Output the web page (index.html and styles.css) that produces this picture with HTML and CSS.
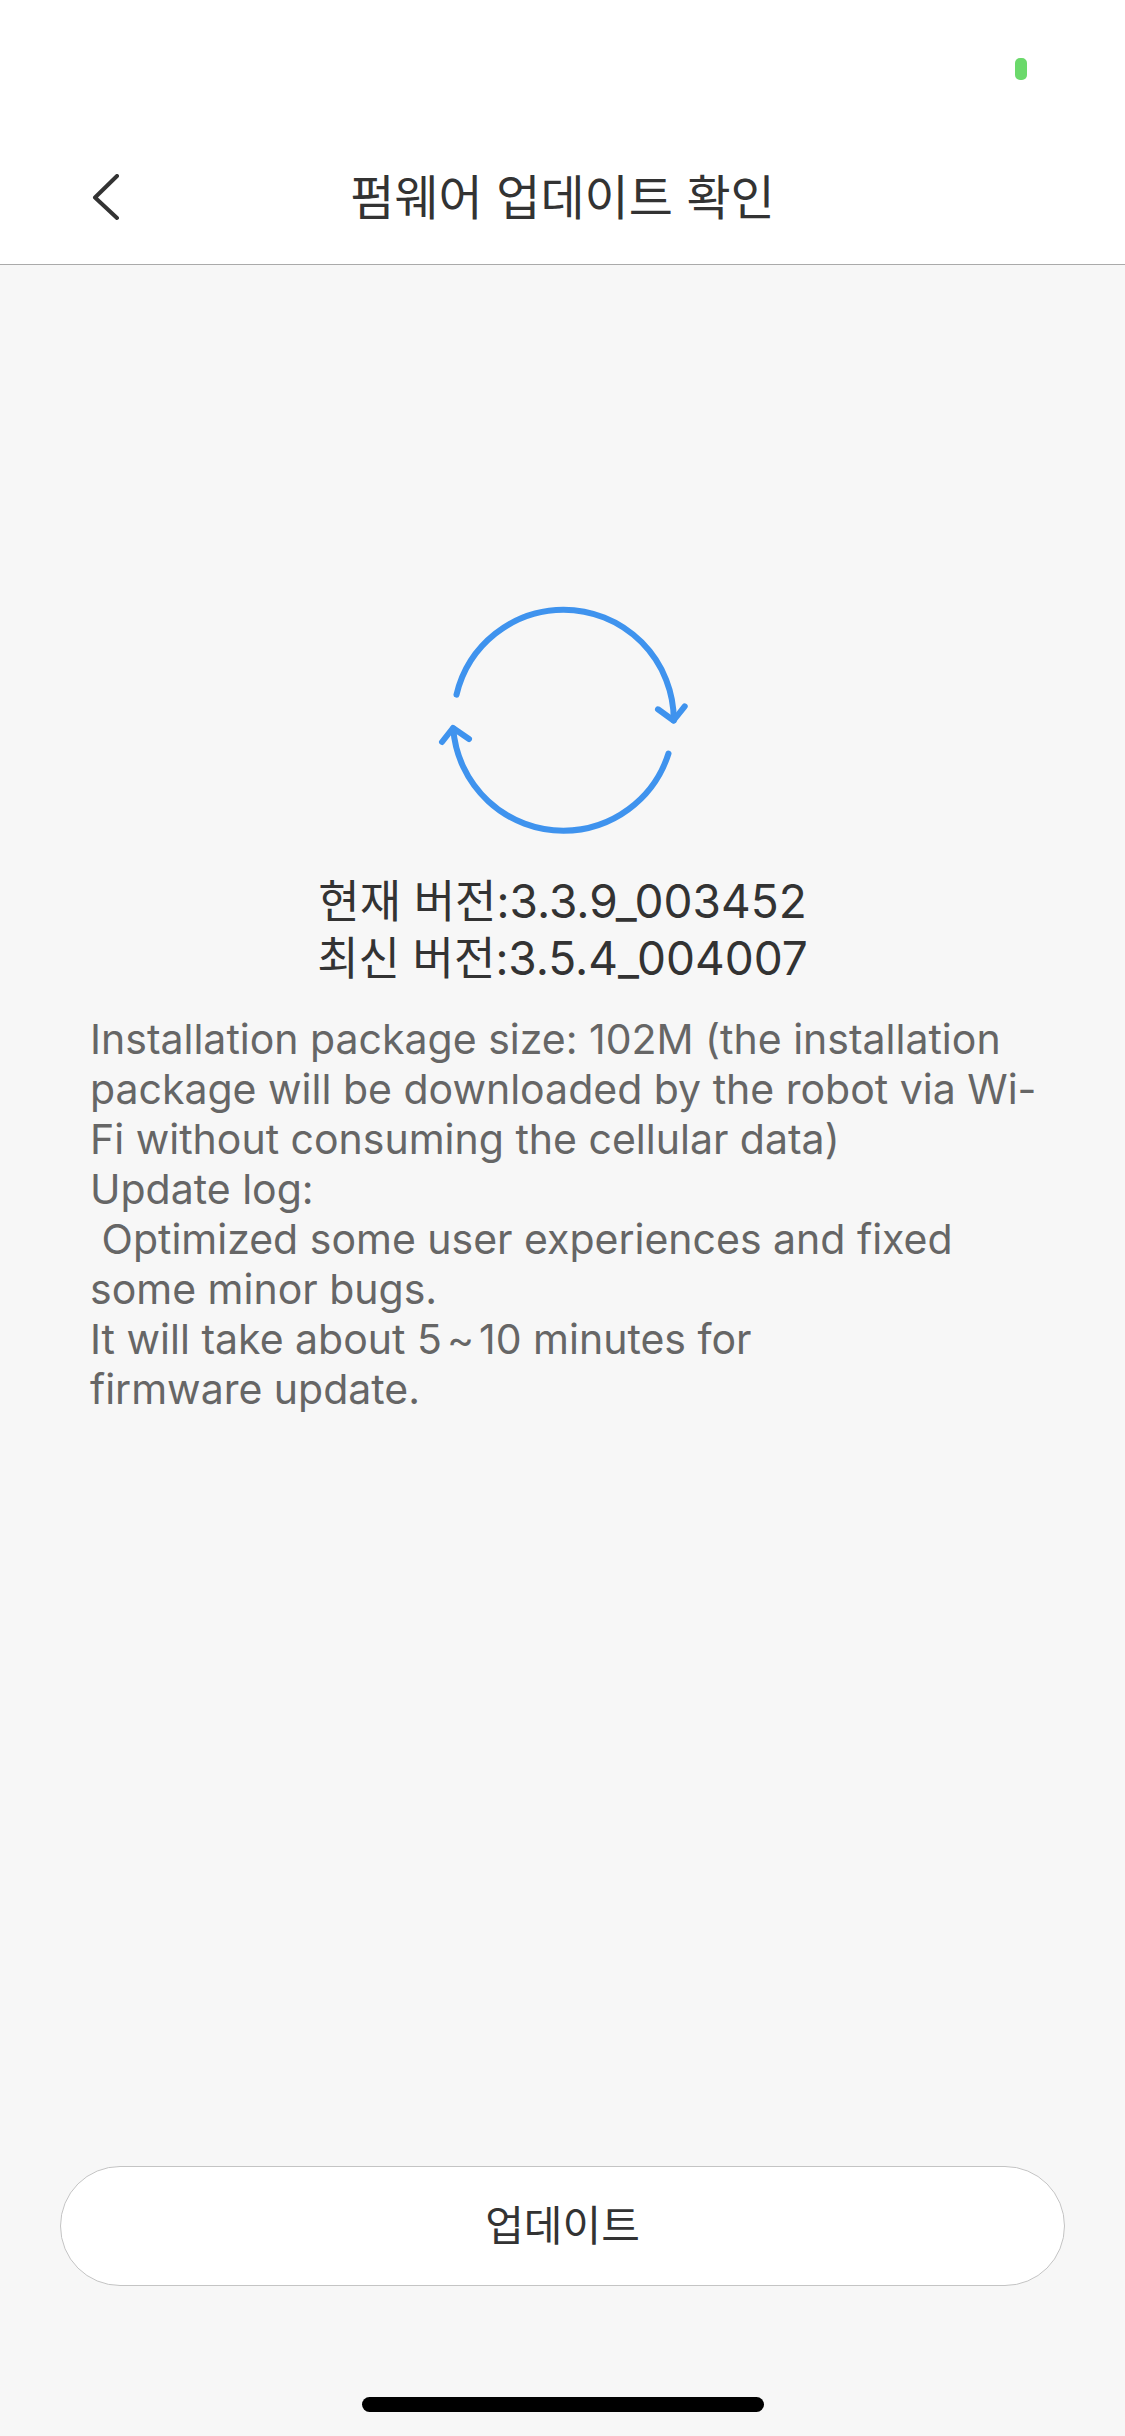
FILE: index.html
```html
<!DOCTYPE html>
<html lang="ko">
<head>
<meta charset="utf-8">
<meta name="viewport" content="width=device-width, initial-scale=1">
<title>펌웨어 업데이트 확인</title>
<link rel="stylesheet" href="styles.css">
</head>
<body>
<div class="status-bar"><span class="recording-dot"></span></div>
<header class="nav-bar">
  <button class="back" type="button" aria-label="뒤로">
    <svg class="back-icon" viewBox="0 0 32 48" aria-hidden="true"><path d="M27 2 5 23.500 27 44"/></svg>
  </button>
  <h1 class="title">펌웨어 업데이트 확인</h1>
</header>
<main class="content">
  <svg class="sync-icon" viewBox="0 0 250 230" aria-hidden="true">
    <path d="M18.500 89.700A110.500 110.500 0 0 1 125.500 4.700A110.500 110.500 0 0 1 235.800 115.500"/>
    <path d="M220 104.300 235.500 115.500 246.700 101.300"/>
    <path d="M230.500 148.500A110.500 110.500 0 0 1 125.500 225.700A110.500 110.500 0 0 1 15.200 123.500"/>
    <path d="M4 137 15 123 31 134"/>
  </svg>
  <div class="versions">
    <p>현재 버전:<span class="number">3.3.9_003452</span></p>
    <p>최신 버전:<span class="number">3.5.4_004007</span></p>
  </div>
  <div class="notes">
    <p>Installation package size: 102M (the installation package will be downloaded by the robot via Wi-<br>Fi without consuming the cellular data)</p>
    <p>Update log:</p>
    <p class="log-entry"> Optimized some user experiences and fixed some minor bugs.</p>
    <p>It will take about 5<span class="tilde">~</span>10 minutes for<br>firmware update.</p>
  </div>
</main>
<footer class="actions">
  <button class="update" type="button">업데이트</button>
  <div class="home-indicator"></div>
</footer>
</body>
</html>
```
FILE: styles.css
```css
* {
  box-sizing: border-box;
}

body {
  display: flex;
  flex-direction: column;
  min-height: 100vh;
  margin: 0;
  background: #f7f7f7;
  color: #333;
  font-family: Inter, "Noto Sans CJK KR", sans-serif;
}

h1,
p {
  margin: 0;
}

.status-bar {
  display: flex;
  justify-content: flex-end;
  height: 132px;
  padding: 58px 98px 0;
  background: #fff;
}

.recording-dot {
  width: 12px;
  height: 22px;
  border-radius: 5px;
  background: #6bd96b;
}

.nav-bar {
  display: grid;
  grid-template-columns: 60px 1fr 60px;
  align-items: center;
  height: 133px;
  padding: 0 90px;
  border-bottom: 1px solid #aaa;
  background: #fff;
}

.back {
  display: flex;
  padding: 0;
  border: 0;
  background: none;
}

.back-icon {
  width: 32px;
  height: 48px;
  fill: none;
  stroke: #333;
  stroke-width: 4;
  stroke-linecap: round;
  stroke-linejoin: round;
}

.title {
  font-size: 48px;
  font-weight: 400;
  line-height: 60px;
  text-align: center;
}

.content {
  display: flex;
  flex: 1;
  flex-direction: column;
  padding-top: 340px;
}

.sync-icon {
  align-self: center;
  width: 250px;
  height: 230px;
  fill: none;
  stroke: #3f93ee;
  stroke-width: 6;
  stroke-linecap: round;
  stroke-linejoin: round;
}

.versions {
  margin-top: 38px;
  font-size: 45px;
  line-height: 57px;
  text-align: center;
}

.number {
  font-size: 46px;
}

.notes {
  margin-top: 27px;
  padding: 0 70px 0 90px;
  color: #666;
  font-size: 41px;
  line-height: 50px;
}

.log-entry {
  white-space: pre-wrap;
}

.tilde {
  padding: 0 5px;
}

.actions {
  display: flex;
  flex-direction: column;
  align-items: center;
  gap: 111px;
  padding: 0 60px 24px;
}

.update {
  width: 100%;
  height: 120px;
  padding: 0 0 8px;
  border: 1px solid #c4c4c4;
  border-radius: 60px;
  background: #fff;
  color: #333;
  font-family: inherit;
  font-size: 42px;
}

.home-indicator {
  width: 402px;
  height: 15px;
  border-radius: 8px;
  background: #000;
}
```
